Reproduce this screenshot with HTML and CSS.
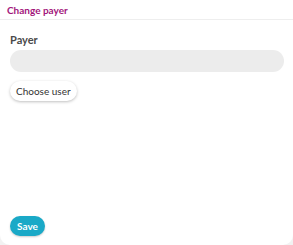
FILE: index.html
```html
<!DOCTYPE html>
<html lang="en">
  <head>
    <meta charset="UTF-8" />
    <meta name="viewport" content="width=device-width, initial-scale=1.0" />
    <title>Change payer</title>
    <link rel="stylesheet" href="styles.css">
  </head>
  <body>
    <div class="dialog">
      <div class="dialog-header">Change payer</div>
      <div class="dialog-body">
        <p class="field-label">Payer</p>
        <div class="pill-input"></div>
        <button class="choose-btn">Choose user</button>
      </div>
      <div class="dialog-footer">
        <button class="save-btn">Save</button>
      </div>
    </div>
  </body>
</html>
```

FILE: styles.css
```css
html,
body {
  margin: 0;
  height: 100%;
}
body {
  background-color: #f2f2f2;
  font-family: Lato, "Open Sans", sans-serif;
}
.dialog {
  display: flex;
  flex-direction: column;
  height: 245px;
  background-color: white;
  border-radius: 0 0 10px 10px;
  box-sizing: border-box;
}
.dialog-header {
  height: 20px;
  padding: 4px 7px 0;
  box-sizing: border-box;
  border-bottom: 1px solid #eeeeee;
  color: #a2167b;
  font-size: 10px;
  font-weight: 700;
}
.dialog-body {
  flex: 1;
  padding: 0 10px;
}
.field-label {
  margin: 13px 0 4px;
  color: #4a4a4a;
  font-size: 11px;
  font-weight: 700;
}
.pill-input {
  height: 22px;
  border-radius: 11px;
  background-color: #ececec;
  margin-right: -1px;
}
.choose-btn {
  margin-top: 9px;
  height: 20px;
  padding: 0 6px;
  border: none;
  border-radius: 10px;
  background-color: white;
  box-shadow: 0 1px 3px rgba(0, 0, 0, 0.25);
  color: #333333;
  font-family: inherit;
  font-size: 10px;
}
.dialog-footer {
  padding: 0 10px 9px;
}
.save-btn {
  height: 20px;
  padding: 0 7px;
  border: none;
  border-radius: 10px;
  background-color: #1aa9c7;
  box-shadow: 0 1px 2px rgba(0, 0, 0, 0.2);
  color: white;
  font-family: inherit;
  font-size: 10px;
  font-weight: 700;
}
```
